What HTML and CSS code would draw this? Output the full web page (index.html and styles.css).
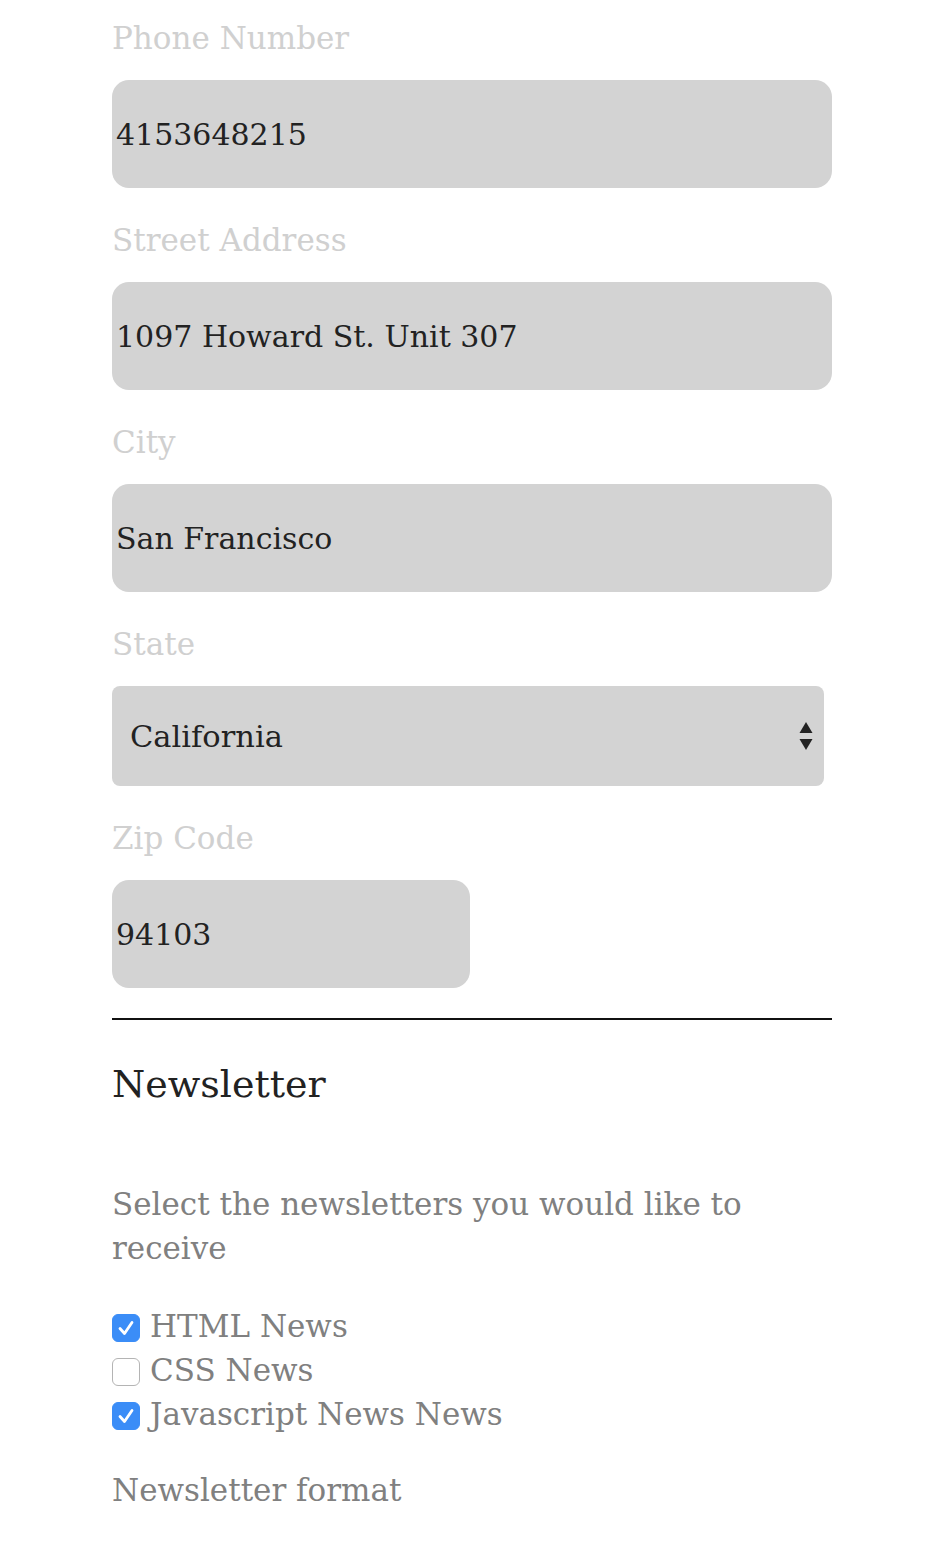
FILE: index.html
```html
<!DOCTYPE html>
<html lang="en">
<head>
<meta charset="utf-8">
<title>Form</title>
<link rel="stylesheet" href="styles.css">
</head>
<body>
<form class="form">
  <div class="field">
    <label class="label" for="phone">Phone Number</label>
    <input class="input" id="phone" type="text" value="4153648215">
  </div>
  <div class="field">
    <label class="label" for="street">Street Address</label>
    <input class="input" id="street" type="text" value="1097 Howard St. Unit 307">
  </div>
  <div class="field">
    <label class="label" for="city">City</label>
    <input class="input" id="city" type="text" value="San Francisco">
  </div>
  <div class="field">
    <label class="label" for="state">State</label>
    <div class="select-wrap">
      <select class="select" id="state">
        <option>California</option>
      </select>
      <svg class="select-arrows" width="14" height="30" viewBox="0 0 14 30" aria-hidden="true">
        <path d="M7 0 L13.5 11 L0.5 11 Z" fill="#222"/>
        <path d="M0.5 17 L13.5 17 L7 28 Z" fill="#222"/>
      </svg>
    </div>
  </div>
  <div class="field">
    <label class="label" for="zip">Zip Code</label>
    <input class="input input-short" id="zip" type="text" value="94103">
  </div>
  <hr class="rule">
  <h2 class="heading">Newsletter</h2>
  <p class="text">Select the newsletters you would like to receive</p>
  <div class="checks">
    <label class="check"><input type="checkbox" class="box" checked><span>HTML News</span></label>
    <label class="check"><input type="checkbox" class="box"><span>CSS News</span></label>
    <label class="check"><input type="checkbox" class="box" checked><span>Javascript News News</span></label>
  </div>
  <p class="text format">Newsletter format</p>
  <div class="checks">
    <label class="check"><input type="checkbox" class="box"><span>HTML</span></label>
  </div>
</form>
</body>
</html>
```
FILE: styles.css
```css
html, body {
  margin: 0;
  padding: 0;
  background: #ffffff;
}

body {
  font-family: "DejaVu Serif", "Liberation Serif", serif;
  color: #222222;
}

.form {
  width: 720px;
  margin-left: 112px;
  padding-top: 16px;
}

.field {
  margin-bottom: 30px;
}

.label {
  display: block;
  font-size: 31px;
  line-height: 44px;
  color: #d0d0d0;
  margin-bottom: 20px;
}

.input {
  display: block;
  box-sizing: border-box;
  width: 720px;
  height: 108px;
  border: none;
  border-radius: 17px;
  background: #d3d3d3;
  padding: 0 4px;
  font-family: "DejaVu Serif", "Liberation Serif", serif;
  font-size: 30px;
  color: #222222;
  outline: none;
}

.input-short {
  width: 358px;
}

.select-wrap {
  position: relative;
  width: 712px;
}

.select {
  display: block;
  box-sizing: border-box;
  width: 712px;
  height: 100px;
  border: none;
  border-radius: 8px;
  background: #d3d3d3;
  padding: 0 18px;
  font-family: "DejaVu Serif", "Liberation Serif", serif;
  font-size: 30.5px;
  color: #222222;
  -webkit-appearance: none;
  appearance: none;
  outline: none;
}

.select-arrows {
  position: absolute;
  right: 11px;
  top: 36px;
}

.rule {
  border: none;
  height: 2px;
  background: #111111;
  margin: 0;
}

.heading {
  font-size: 38px;
  line-height: 50px;
  font-weight: normal;
  color: #222222;
  margin: 39px 0 73px;
}

.text {
  font-size: 31px;
  line-height: 44px;
  color: #808080;
  margin: 0 0 34px;
}

.format {
  margin-top: 32px;
}

.checks {
  display: flex;
  flex-direction: column;
}

.check {
  display: flex;
  align-items: center;
  gap: 10px;
  font-size: 31px;
  line-height: 44px;
  color: #808080;
}

.box {
  -webkit-appearance: none;
  appearance: none;
  box-sizing: border-box;
  width: 28px;
  height: 28px;
  margin: 4px 0 0 0;
  border: 1px solid #b4b4b4;
  border-radius: 6px;
  background: #ffffff;
  flex: none;
}

.box:checked {
  border-color: #3b8df7;
  background: #3b8df7 url("data:image/svg+xml,%3Csvg xmlns='http://www.w3.org/2000/svg' width='28' height='28' viewBox='0 0 28 28'%3E%3Cpath d='M8 14.5 L12.5 19.5 L20 8.5' fill='none' stroke='white' stroke-width='2.8' stroke-linecap='round' stroke-linejoin='round'/%3E%3C/svg%3E") center / 28px 28px no-repeat;
}
```
